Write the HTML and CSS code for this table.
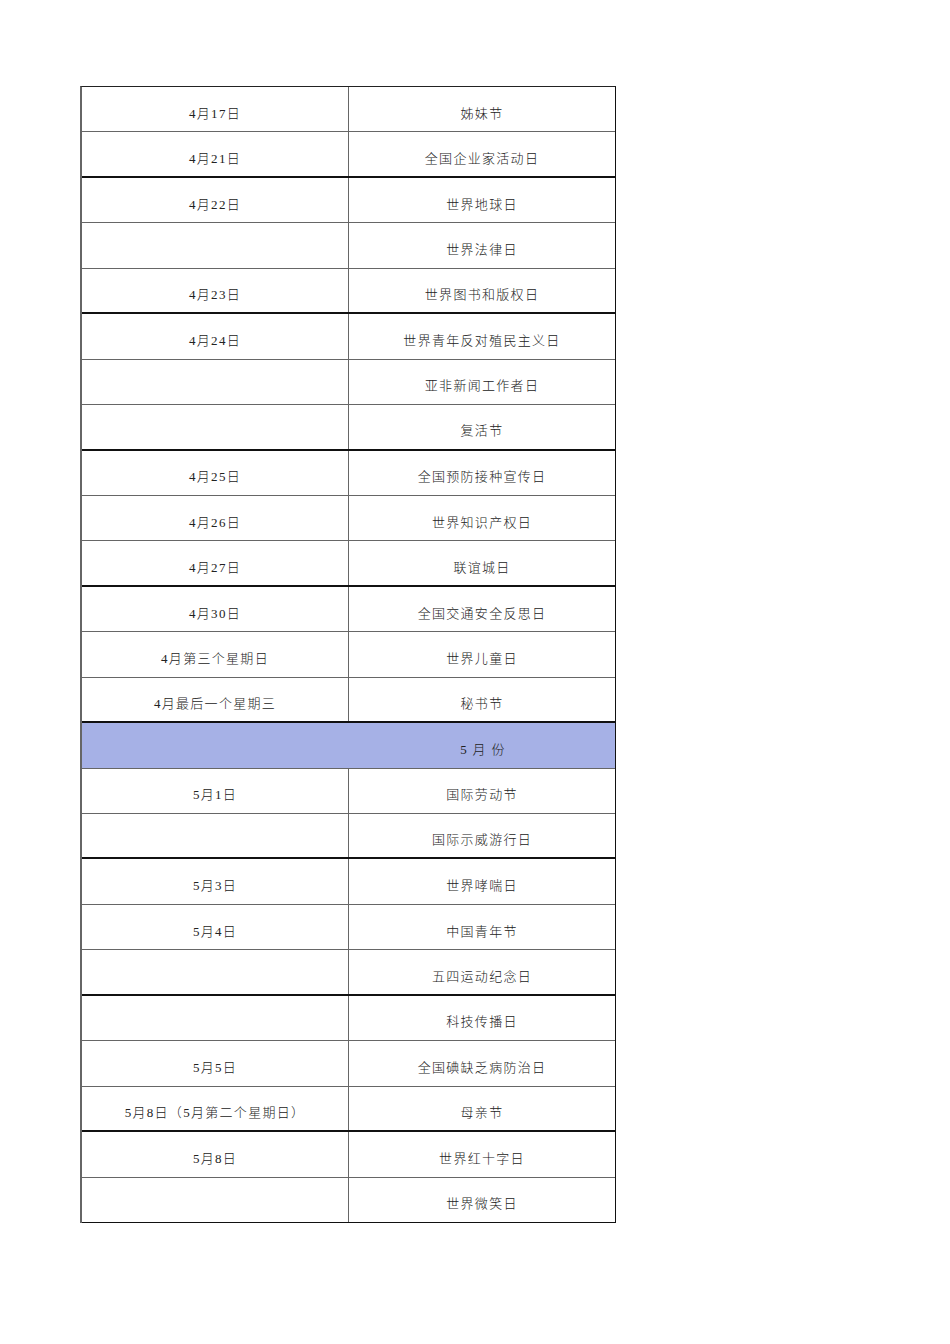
FILE: index.html
```html
<!DOCTYPE html>
<html lang="zh">
<head>
<meta charset="utf-8">
<link rel="stylesheet" href="styles.css">
</head>
<body>
<div class="sheet">
  <div class="row"><div class="c l">4月17日</div><div class="c r">姊妹节</div></div>
  <div class="row thick"><div class="c l">4月21日</div><div class="c r">全国企业家活动日</div></div>
  <div class="row"><div class="c l">4月22日</div><div class="c r">世界地球日</div></div>
  <div class="row"><div class="c l"></div><div class="c r">世界法律日</div></div>
  <div class="row thick"><div class="c l">4月23日</div><div class="c r">世界图书和版权日</div></div>
  <div class="row"><div class="c l">4月24日</div><div class="c r">世界青年反对殖民主义日</div></div>
  <div class="row"><div class="c l"></div><div class="c r">亚非新闻工作者日</div></div>
  <div class="row thick"><div class="c l"></div><div class="c r">复活节</div></div>
  <div class="row"><div class="c l">4月25日</div><div class="c r">全国预防接种宣传日</div></div>
  <div class="row"><div class="c l">4月26日</div><div class="c r">世界知识产权日</div></div>
  <div class="row thick"><div class="c l">4月27日</div><div class="c r">联谊城日</div></div>
  <div class="row"><div class="c l">4月30日</div><div class="c r">全国交通安全反思日</div></div>
  <div class="row"><div class="c l">4月第三个星期日</div><div class="c r">世界儿童日</div></div>
  <div class="row thick"><div class="c l">4月最后一个星期三</div><div class="c r">秘书节</div></div>
  <div class="row month"><div class="c l"></div><div class="c r">5 月 份</div></div>
  <div class="row"><div class="c l">5月1日</div><div class="c r">国际劳动节</div></div>
  <div class="row thick"><div class="c l"></div><div class="c r">国际示威游行日</div></div>
  <div class="row"><div class="c l">5月3日</div><div class="c r">世界哮喘日</div></div>
  <div class="row"><div class="c l">5月4日</div><div class="c r">中国青年节</div></div>
  <div class="row thick"><div class="c l"></div><div class="c r">五四运动纪念日</div></div>
  <div class="row"><div class="c l"></div><div class="c r">科技传播日</div></div>
  <div class="row"><div class="c l">5月5日</div><div class="c r">全国碘缺乏病防治日</div></div>
  <div class="row thick"><div class="c l">5月8日（5月第二个星期日）</div><div class="c r">母亲节</div></div>
  <div class="row"><div class="c l">5月8日</div><div class="c r">世界红十字日</div></div>
  <div class="row last"><div class="c l"></div><div class="c r">世界微笑日</div></div>
</div>
</body>
</html>
```

FILE: styles.css
```css
html, body {
  margin: 0;
  padding: 0;
  background: #ffffff;
}
body {
  padding: 86px 0 0 80px;
  font-family: "Liberation Serif", "Noto Sans CJK SC", serif;
  font-size: 13px;
  font-weight: 300;
  color: #222;
}
.sheet {
  width: 536px;
  border-top: 1px solid #222;
  border-left: 2px solid #666;
  border-right: 1px solid #111;
  box-sizing: border-box;
}
.row {
  display: flex;
  height: 45.44px;
  box-sizing: border-box;
  border-bottom: 1.5px solid #666;
}
.row.thick {
  border-bottom: 2px solid #111;
}
.row.last {
  border-bottom: 1px solid #111;
}
.c {
  display: flex;
  align-items: center;
  justify-content: center;
  padding-top: 6px;
  box-sizing: border-box;
  letter-spacing: 1.3px;
  white-space: nowrap;
}
.l {
  width: 267px;
  border-right: 1.5px solid #666;
}
.r {
  flex: 1;
}
.month {
  background: #a6b1e6;
}
.month .l {
  border-right: none;
}
.month .r {
  padding-left: 2px;
}
```
